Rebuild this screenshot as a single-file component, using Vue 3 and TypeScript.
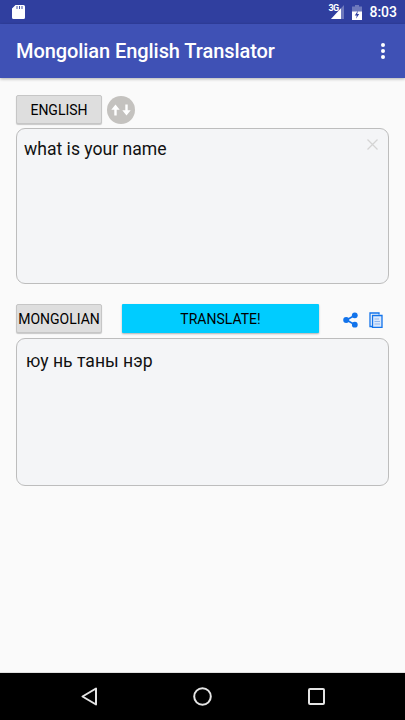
<script setup lang="ts">
const sourceText: string = 'what is your name'
const resultText: string = 'юу нь таны нэр'
</script>

<template>
  <div class="screen">
    <div class="status">
      <svg class="sd" width="13" height="14" viewBox="0 0 13 14"><path d="M3.500 0H11.500A1.500 1.500 0 0 1 13 1.500V12.500A1.500 1.500 0 0 1 11.500 14H1.500A1.500 1.500 0 0 1 0 12.500V3.500Z" fill="#fff"/><path d="M5 1v3M7.500 1v3M10 1v3" stroke="#303f9f" stroke-width=".9"/></svg>
      <div class="status-right">
        <div class="signal">
          <span class="three-g">3G</span>
          <svg width="13" height="14" viewBox="0 0 13 14"><path d="M13 0V14H0Z" fill="#fff" fill-opacity=".3"/><path d="M10 3.200V14H0Z" fill="#fff"/></svg>
        </div>
        <svg class="battery" width="10" height="15" viewBox="0 0 10 15"><path d="M3 0H7V1.500H10V15H0V1.500H3Z" fill="#fff" fill-opacity=".3"/><path d="M0 6.500H10V15H0Z" fill="#fff"/><path d="M6 5.500L2.800 10.500H4.800L4 13.800L7.200 9H5.200Z" fill="#303f9f"/></svg>
        <span class="clock">8:03</span>
      </div>
    </div>
    <header class="appbar">
      <span class="title">Mongolian English Translator</span>
      <div class="overflow"><i></i><i></i><i></i></div>
    </header>
    <main class="content">
      <div class="lang-row">
        <button class="lang">ENGLISH</button>
        <div class="swap">
          <svg width="20" height="12" viewBox="0 0 20 12"><path d="M4.500 0.500L8.700 5.700H5.700V11.500H3.300V5.700H0.300Z" fill="#fff"/><path d="M15.500 11.500L11.300 6.300H14.300V0.500H16.700V6.300H19.700Z" fill="#fff"/></svg>
        </div>
      </div>
      <div class="box box-source">
        <span class="box-text">{{ sourceText }}</span>
        <svg class="clear" width="11" height="11" viewBox="0 0 11 11"><path d="M0.500 0.500L10.500 10.500M10.500 0.500L0.500 10.500" stroke="#d4d4d4" stroke-width="1.300"/></svg>
      </div>
      <div class="action-row">
        <button class="lang">MONGOLIAN</button>
        <button class="translate">TRANSLATE!</button>
        <svg class="share" width="15" height="16" viewBox="0 0 15 16"><path d="M11.500 3.500L3.500 8L11.500 12.500" stroke="#1273eb" stroke-width="1.600" fill="none"/><circle cx="11.800" cy="3.300" r="2.900" fill="#1273eb"/><circle cx="3.200" cy="8" r="3" fill="#1273eb"/><circle cx="11.800" cy="12.700" r="2.900" fill="#1273eb"/></svg>
        <svg class="copy" width="14" height="16" viewBox="0 0 14 16"><path d="M3 14.500H1V1H10V2.500" fill="none" stroke="#1273eb" stroke-width="1.300"/><path d="M3.500 3.500H13V15.300H3.500Z" fill="#dbe8fb" stroke="#1273eb" stroke-width="1.300"/><path d="M5.500 7H10M5.500 9.500H11M5.500 12H11" stroke="#8db6f0" stroke-width="1"/></svg>
      </div>
      <div class="box box-result">
        <span class="box-text">{{ resultText }}</span>
      </div>
    </main>
    <nav class="navbar">
      <svg width="16" height="19" viewBox="0 0 16 19"><path d="M15 1.500V17.500L1.500 9.500Z" fill="none" stroke="#e4e4e4" stroke-width="2" stroke-linejoin="round"/></svg>
      <svg width="19" height="19" viewBox="0 0 19 19"><circle cx="9.500" cy="9.500" r="8.300" fill="none" stroke="#e4e4e4" stroke-width="2"/></svg>
      <svg width="17" height="17" viewBox="0 0 17 17"><rect x="1" y="1" width="15" height="15" rx="1" fill="none" stroke="#e4e4e4" stroke-width="2"/></svg>
    </nav>
  </div>
</template>

<style>
html, body { margin: 0; padding: 0; background: #fafafa; }
</style>

<style scoped>
.screen {
  width: 405px;
  height: 720px;
  display: flex;
  flex-direction: column;
  background: #fafafa;
  font-family: Roboto, "Noto Sans", sans-serif;
  overflow: hidden;
}
.status {
  height: 24px;
  flex: none;
  background: #303f9f;
  display: flex;
  align-items: center;
  justify-content: space-between;
  padding: 0 8px 0 12px;
  box-sizing: border-box;
}
.status-right { display: flex; align-items: center; }
.signal { position: relative; width: 16px; height: 14px; margin-right: 8px; display: flex; justify-content: flex-end; }
.three-g { position: absolute; left: 0; top: -1px; color: #fff; font-size: 9px; font-weight: 700; line-height: 9px; letter-spacing: -.5px; }
.battery { margin-right: 7px; }
.clock { color: #fff; font-size: 14px; font-weight: 500; line-height: 16px; }
.appbar {
  height: 54px;
  flex: none;
  background: #3f51b5;
  display: flex;
  align-items: center;
  justify-content: space-between;
  padding: 0 20px 1px 16px;
  box-sizing: border-box;
  box-shadow: 0 1px 3px rgba(0, 0, 0, .3);
  position: relative;
}
.title { color: #fff; font-size: 20px; font-weight: 500; line-height: 24px; letter-spacing: -.07px; }
.overflow { display: flex; flex-direction: column; gap: 2px; }
.overflow i { width: 4px; height: 4px; border-radius: 50%; background: #fff; }
.content {
  flex: 1;
  padding: 17px 16px 0;
  display: flex;
  flex-direction: column;
}
.lang-row { display: flex; align-items: center; gap: 5px; height: 29px; }
button { font-family: inherit; color: #000; cursor: pointer; padding: 0; }
.lang {
  width: 86px;
  height: 29px;
  flex: none;
  box-sizing: border-box;
  background: #dedede;
  border: 1px solid #c6c6c6;
  border-radius: 2px;
  box-shadow: 0 1px 1px rgba(0, 0, 0, .2);
  font-size: 14px;
  white-space: nowrap;
}
.swap {
  width: 28px;
  height: 28px;
  border-radius: 50%;
  background: #c4c2bf;
  display: flex;
  align-items: center;
  justify-content: center;
}
.box {
  box-sizing: border-box;
  width: 373px;
  background: #f4f5f7;
  border: 1px solid #bdbdbd;
  border-radius: 9px;
  position: relative;
  color: #111;
  font-size: 17.6px;
  line-height: 24px;
}
.box-source { height: 156px; margin-top: 4px; padding: 8px 0 0 7px; }
.box-result { height: 148px; margin-top: 5px; padding: 10px 0 0 9px; }
.clear { position: absolute; top: 10px; right: 10px; }
.action-row { display: flex; align-items: center; margin-top: 20px; height: 29px; }
.translate {
  width: 197px;
  height: 29px;
  margin-left: 20px;
  flex: none;
  background: #00ccff;
  border: none;
  border-radius: 1px;
  box-shadow: 0 1px 2px rgba(0, 0, 0, .3);
  font-size: 14px;
}
.share { margin-left: 24px; margin-top: 3px; }
.copy { margin-left: 11px; margin-top: 3px; }
.navbar {
  height: 48px;
  flex: none;
  background: #000;
  display: grid;
  grid-template-columns: 16px 19px 17px;
  justify-content: start;
  align-items: center;
  padding-left: 81px;
  box-sizing: border-box;
  column-gap: 96px;
  border-top: 1px solid #e0e0e0;
}
</style>
